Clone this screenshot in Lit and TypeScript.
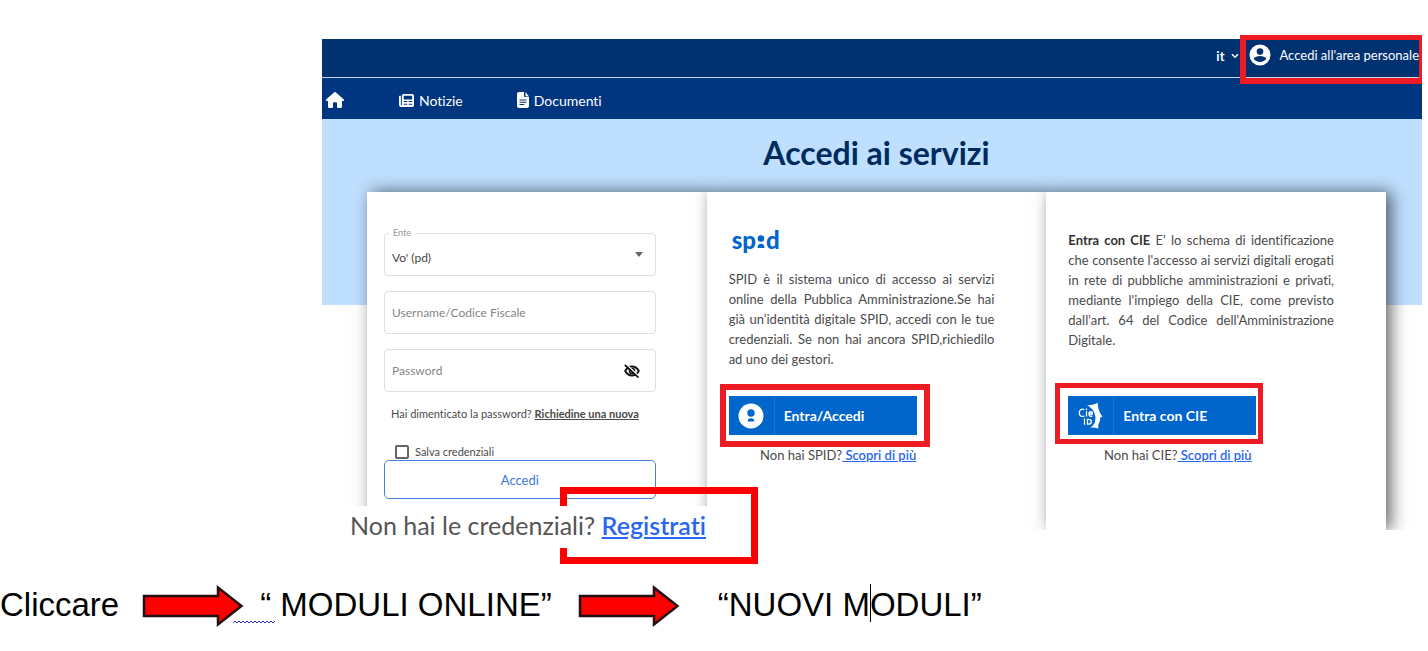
import { LitElement, html, css, svg } from "lit";
import { customElement } from "lit/decorators.js";

const homeIcon = svg`<svg class="icon" width="18" height="16" viewBox="0 0 576 512" aria-hidden="true"><path fill="currentColor" d="M575.8 255.500c0 18-15 32.100-32 32.100h-32l.7 160.200c0 2.700-.2 5.400-.5 8.100V472c0 22.100-17.900 40-40 40H392c-22.100 0-40-17.900-40-40V360c0-17.700-14.300-32-32-32h-64c-17.700 0-32 14.300-32 32v112c0 22.100-17.900 40-40 40H104c-22.100 0-40-17.900-40-40V287.600H32c-18 0-32-14-32-32.100 0-9 3-17 10-24L266.400 8c7-7 15-8 22-8s15 2 21 7l255.400 224.500c8 7 12 15 11 24z"/></svg>`;
const newsIcon = svg`<svg class="icon" width="15" height="15" viewBox="0 0 512 512" aria-hidden="true"><path fill="currentColor" fill-rule="evenodd" d="M96 96c0-35.300 28.700-64 64-64h288c35.300 0 64 28.700 64 64v320c0 35.300-28.700 64-64 64H80c-44.200 0-80-35.800-80-80V128c0-17.700 14.300-32 32-32s32 14.300 32 32v272c0 8.800 7.200 16 16 16s16-7.200 16-16V96zm64 24v80c0 13.300 10.700 24 24 24h240c13.300 0 24-10.700 24-24v-80c0-13.300-10.700-24-24-24H184c-13.300 0-24 10.700-24 24zm0 152v36h120v-36H160zm168 0v36h120v-36H328zM160 368v36h120v-36H160zm168 0v36h120v-36H328z"/></svg>`;
const docIcon = svg`<svg class="icon" width="12" height="16" viewBox="0 0 384 512" aria-hidden="true"><path fill="currentColor" fill-rule="evenodd" d="M64 0C28.700 0 0 28.700 0 64v384c0 35.300 28.700 64 64 64h256c35.300 0 64-28.700 64-64V160H256c-17.700 0-32-14.300-32-32V0H64zm208 0v112c0 18 14 32 32 32h80L272 0zM80 236h224v32H80v-32zm0 72h224v32H80v-32zm0 72h150v32H80v-32z"/></svg>`;
const userIcon = svg`<svg width="22" height="22" viewBox="0 0 22 22" aria-hidden="true"><circle cx="11" cy="11" r="10.500" fill="#fff"/><circle cx="11" cy="7.600" r="3.300" fill="#003170"/><path fill="#003170" d="M4.600 14.800c1-2 3.800-2.800 6.400-2.800s5.400.8 6.400 2.800c-1.400 2-3.800 3.200-6.400 3.200s-5-1.200-6.400-3.200z"/></svg>`;
const chevronIcon = svg`<svg width="8" height="6" viewBox="0 0 8 6" aria-hidden="true"><path d="M1 1.200l3 3 3-3" fill="none" stroke="#fff" stroke-width="1.500"/></svg>`;
const eyeOffIcon = svg`<svg width="16" height="14" viewBox="0 0 16 14" aria-hidden="true"><path d="M1.200 7C2.800 4 5.200 2.500 8 2.500S13.200 4 14.800 7C13.200 10 10.800 11.500 8 11.500S2.800 10 1.200 7z" fill="none" stroke="#111" stroke-width="1.900"/><circle cx="8" cy="7" r="2.500" fill="none" stroke="#111" stroke-width="1.600"/><path d="M2 .2l13.500 12.600" stroke="#fff" stroke-width="1.600"/><path d="M.8 1l13.700 12.600" stroke="#111" stroke-width="1.700"/></svg>`;
const spidUserIcon = svg`<svg width="26" height="26" viewBox="0 0 26 26" aria-hidden="true"><circle cx="13" cy="13" r="12.500" fill="#fff"/><circle cx="13" cy="10" r="3.700" fill="#0066cc"/><path fill="#0066cc" d="M9.600 18.600c0-2.400 1.500-3.400 3.400-3.400s3.400 1 3.400 3.400z"/></svg>`;
const cieIcon = svg`<svg width="26" height="28" viewBox="0 0 26 28" aria-hidden="true"><g fill="none" stroke="#fff" stroke-width="1.300"><path d="M6.300 7.600C3.200 6.300 1.300 8 1.300 10.800s1.900 4.500 5 3.200M8.500 9.300v5.200M10.900 12h3.500c0-3-3.500-3-3.500 0 0 2.500 2 2.700 3.400 1.900M6.500 16.600v6.200M9.500 17.300v4.900h1.100c3.700 0 3.700-4.900 0-4.900z"/><path d="M8.500 6.500v1.500"/></g><path fill="#fff" d="M9 3.300C13 3.600 17 2.200 19.600.8c.4 3 .6 5.600 1.600 8 .5 1.800 1.500 3.600 3.200 5.600l-2.300 1.400c.2 2.400-.4 4.200-1.100 5.200-.4.900-.6 1.500-.7 2.600v3c-2.500-.9-5.300-1.200-8.400-1 4-1.600 5.300-5 5.500-9.600C17.500 10.800 14 5.600 9 3.300z"/></svg>`;
const arrow = svg`<svg class="arrow" width="102" height="44" viewBox="0 0 102 44" aria-hidden="true"><path d="M2 12h74V3.500L99.500 22 76 40.500V32H2z" fill="#fe0000" stroke="#241010" stroke-width="2.500"/></svg>`;

@customElement("app-root")
export class AppRoot extends LitElement {
  static styles = css`
    :host {
      display: block;
      box-sizing: border-box;
      padding-top: 39px;
      background: #fff;
      color: #4a4a4a;
      font-family: Lato, Roboto, sans-serif;
      font-variant-ligatures: none;
      overflow-x: hidden;
    }
    * { box-sizing: border-box; }
    svg { display: block; flex: none; }
    a { color: inherit; }
    p, h1 { margin: 0; }
    button { font-family: inherit; cursor: pointer; }
    .site { margin: 0 6px 0 322px; }
    .topbar {
      height: 39px;
      background: #003170;
      border-bottom: 1px solid #c5d6ea;
      display: flex;
      justify-content: flex-end;
      align-items: stretch;
      color: #fff;
    }
    .lang {
      display: flex;
      align-items: center;
      gap: 7px;
      border: 0;
      background: none;
      color: #fff;
      padding: 0 10px 4px 0;
      font-size: 13px;
      font-weight: 700;
    }
    .account {
      position: relative;
      display: flex;
      align-items: center;
      gap: 8px;
      padding: 0 3px 6px 0;
      font-size: 13px;
      text-decoration: none;
      white-space: nowrap;
    }
    .account::after, .marked::after {
      content: "";
      position: absolute;
      pointer-events: none;
      border: 6px solid #ed1c24;
    }
    .account::after {
      inset: -4px 0 -7px -9px;
      border-width: 5px 3px 6px 6px;
    }
    .nav {
      height: 41px;
      background: #003580;
      display: flex;
      align-items: center;
      padding: 3px 4px 0;
      color: #fff;
      font-size: 14px;
    }
    .nav a { display: flex; align-items: center; gap: 5px; text-decoration: none; }
    .nav .home { margin-right: 55px; }
    .nav .news { margin-right: 54px; }
    .hero {
      height: 186px;
      background: #bfdfff;
      padding: 14px 0 0 9px;
      text-align: center;
    }
    .hero h1 { font-size: 32px; line-height: 40px; font-weight: 700; color: #002b5e; }
    .stage { overflow: hidden; margin-top: -143px; padding: 30px 36px 0 45px; }
    .cards { display: grid; grid-template-columns: repeat(3, minmax(0, 1fr)); }
    .card {
      background: #fff;
      box-shadow: 5px 0 16px rgba(0, 0, 0, .6);
      padding: 38px 52px 0 22px;
      font-size: 13px;
      line-height: 20px;
    }
    .card.login { padding: 41px 51px 31px 17px; display: flex; flex-direction: column; }
    .field { position: relative; display: flex; height: 43px; margin-bottom: 15px; }
    .field input, .field select {
      width: 100%;
      border: 1px solid #dedede;
      border-radius: 4px;
      background: #fff;
      padding: 0 7px;
      font-family: inherit;
      font-size: 12px;
      color: #444;
      appearance: none;
    }
    .field select { padding-top: 5px; }
    .field input::placeholder { color: #858585; opacity: 1; }
    .field label {
      position: absolute;
      left: 5px;
      top: -6px;
      padding: 0 4px;
      background: #fff;
      font-size: 9px;
      line-height: 12px;
      color: #999;
    }
    .caret {
      position: absolute;
      right: 13px;
      top: 19px;
      border: 4px solid transparent;
      border-top: 5px solid #666;
      border-bottom: 0;
      pointer-events: none;
    }
    .eye { position: absolute; right: 16px; top: 15px; border: 0; padding: 0; background: none; }
    .forgot { padding-left: 7px; line-height: 20px; margin: -3px 0 20px; font-size: 11px; white-space: nowrap; }
    .forgot a { font-weight: 700; }
    .save { display: flex; align-items: center; gap: 6px; height: 16px; padding-left: 11px; font-size: 11px; }
    .save input {
      appearance: none;
      width: 14px;
      height: 14px;
      margin: 0;
      border: 2px solid #666;
      border-radius: 2px;
    }
    .submit {
      height: 39px;
      border: 1px solid #4281dc;
      border-radius: 5px;
      background: #fff;
      color: #3f74de;
      font-size: 13px;
    }
    .text { text-align: justify; }
    .text strong { color: #333; }
    .logo {
      display: flex;
      align-items: center;
      height: 20px;
      margin-bottom: 19px;
      padding-left: 3px;
      color: #0066cc;
      font-size: 24px;
      line-height: 20px;
      font-weight: 900;
    }
    .logo svg { margin: 4px 1px 0; }
    .marked { position: relative; width: 188px; margin-top: 27px; }
    .marked.spid::after { inset: -12px -13px -12px -9px; }
    .marked.cie { margin-top: 46px; }
    .marked.cie::after { inset: -13px -7px -9px -13px; border-width: 5px; }
    .enter {
      display: flex;
      align-items: center;
      width: 100%;
      height: 39px;
      border: 0;
      padding: 0;
      background: #0066cc;
      color: #fff;
      font-size: 14px;
      font-weight: 700;
    }
    .enter span:first-child {
      width: 46px;
      height: 100%;
      display: flex;
      justify-content: center;
      align-items: center;
      border-right: 1px solid #1b75d0;
    }
    .enter span:last-child { padding-left: 9px; }
    .more { width: 219px; margin-top: 10px; text-align: center; white-space: nowrap; }
    .more a, .snip a { color: #2a66f0; font-weight: 600; }
    .register { position: relative; width: 418px; height: 77px; margin: -43px 0 0 340px; }
    .outline { position: absolute; inset: 0 0 0 220px; border: 7px solid #fe0000; }
    .snip {
      position: absolute;
      left: 0;
      top: 19px;
      width: 400px;
      height: 42px;
      padding-left: 10px;
      background: #fff;
      font-size: 25px;
      line-height: 38px;
      color: #555;
      white-space: nowrap;
    }
    .steps {
      display: flex;
      align-items: center;
      height: 44px;
      margin: 19px 0 24px;
      color: #000;
      font: 33px/44px "Liberation Sans", Arial, sans-serif;
      white-space: nowrap;
    }
    .steps .arrow { margin: 2px 16px 0 23px; }
    .quote { position: relative; padding-right: 3px; }
    .last { padding-left: 22px; }
    .wave { position: absolute; left: -27px; bottom: 3px; }
    .caret-line { position: absolute; width: 1px; height: 38px; background: #000; margin-top: 1px; }
  `;

  render() {
    return html`
      <div class="site">
        <header>
          <div class="topbar">
            <button class="lang" type="button">it ${chevronIcon}</button>
            <a class="account" href="#">${userIcon}<span>Accedi all'area personale</span></a>
          </div>
          <nav class="nav">
            <a class="home" href="#" aria-label="Home">${homeIcon}</a>
            <a class="news" href="#">${newsIcon}<span>Notizie</span></a>
            <a href="#">${docIcon}<span>Documenti</span></a>
          </nav>
        </header>
        <div class="hero"><h1>Accedi ai servizi</h1></div>
        <main class="stage">
          <div class="cards">
            <form class="card login">
              <div class="field">
                <select id="ente"><option>Vo' (pd)</option></select>
                <label for="ente">Ente</label>
                <span class="caret"></span>
              </div>
              <div class="field"><input type="text" placeholder="Username/Codice Fiscale" aria-label="Username/Codice Fiscale" /></div>
              <div class="field">
                <input type="password" placeholder="Password" aria-label="Password" />
                <button class="eye" type="button" aria-label="Mostra password">${eyeOffIcon}</button>
              </div>
              <p class="forgot">Hai dimenticato la password? <a href="#">Richiedine una nuova</a></p>
              <label class="save"><input type="checkbox" />Salva credenziali</label>
              <button class="submit" type="button">Accedi</button>
            </form>
            <section class="card">
              <div class="logo">sp<svg width="8" height="14" viewBox="0 0 8 14" aria-hidden="true"><circle cx="4" cy="3.500" r="3.300" fill="#0066cc"/><path fill="#0066cc" d="M.5 13c0-3 1.500-4.300 3.500-4.300S7.500 10 7.500 13z"/></svg>d</div>
              <p class="text">SPID è il sistema unico di accesso ai servizi online della Pubblica Amministrazione.Se hai già un'identità digitale SPID, accedi con le tue credenziali. Se non hai ancora SPID,richiedilo ad uno dei gestori.</p>
              <div class="marked spid">
                <button class="enter" type="button"><span>${spidUserIcon}</span><span>Entra/Accedi</span></button>
              </div>
              <p class="more">Non hai SPID?<a href="#"> Scopri di più</a></p>
            </section>
            <section class="card">
              <p class="text"><strong>Entra con CIE</strong> E' lo schema di identificazione che consente l'accesso ai servizi digitali erogati in rete di pubbliche amministrazioni e privati, mediante l'impiego della CIE, come previsto dall'art. 64 del Codice dell'Amministrazione Digitale.</p>
              <div class="marked cie">
                <button class="enter" type="button"><span>${cieIcon}</span><span>Entra con CIE</span></button>
              </div>
              <p class="more">Non hai CIE?<a href="#"> Scopri di più</a></p>
            </section>
          </div>
        </main>
      </div>
      <div class="register">
        <div class="outline"></div>
        <p class="snip">Non hai le credenziali? <a href="#">Registrati</a></p>
      </div>
      <div class="steps">
        <span>Cliccare</span>${arrow}<span class="quote">“ MODULI ONLINE”<svg class="wave" width="42" height="4" viewBox="0 0 42 4" aria-hidden="true"><path d="M0 3l2-2 2 2 2-2 2 2 2-2 2 2 2-2 2 2 2-2 2 2 2-2 2 2 2-2 2 2 2-2 2 2 2-2 2 2 2-2 2 2 2-2" fill="none" stroke="#2b2bd0"/></svg></span>${arrow}<span class="last">“NUOVI M<span class="caret-line"></span>ODULI”</span>
      </div>
    `;
  }
}
